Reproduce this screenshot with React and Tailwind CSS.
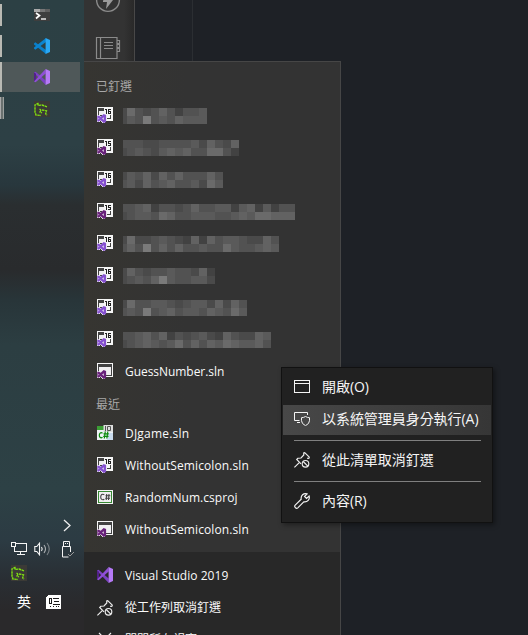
import React from "react";

// Brightness digits of the blurred file names: first cell is half width.
const BLURRED = [
  { v: 16, rows: ["26323531334", "24383435444"] },
  { v: 15, rows: ["333223333425325", "234324545336631"] },
  { v: 16, rows: ["2435253533353", "3425345334264"] },
  { v: 15, rows: ["3345133235334414514133", "2344365334443345466555"] },
  { v: 16, rows: ["26223432151534432253", "35383535334336433454"] },
  { v: 16, rows: ["253233433251", "234358433442"] },
  { v: 16, rows: ["2633443234425253", "3438345344354364"] },
  { v: 16, rows: ["3345351323421532254", "2345434635354654453"] },
];

function Mosaic({ rows }) {
  return (
    <div className="ml-[10px] flex flex-col">
      {rows.map((r, i) => (
        <div key={i} className="flex">
          {r.split("").map((c, j) => {
            const g = 58 + Number(c) * 8;
            return (
              <span key={j} className={j === 0 ? "h-2 w-1" : "h-2 w-2"} style={{ backgroundColor: `rgb(${g},${g},${g})` }} />
            );
          })}
        </div>
      ))}
    </div>
  );
}

function SolutionIcon({ v, plain, dark }) {
  const c = dark || v === 15 ? "#68217a" : "#8550d0";
  return (
    <svg width="16" height="16" viewBox="0 0 16 16" className="shrink-0" shapeRendering="crispEdges">
      <rect width="16" height="14" fill="#f6f6f6" />
      <rect x="1" y="1" width="14" height="12" fill="#424242" />
      {plain ? (
        <rect x="2" y="4" width="12" height="8" fill="#f0eff1" />
      ) : (
        <>
          <rect x="2" y="4" width="6" height="4" fill="#f0eff1" />
          <rect x="7" y="1" width="8" height="7" fill="#f6f6f6" />
          <path d="M8 2h2v5h-1V3h-1z" fill="#222" />
          {v === 16 ? (
            <path d="M14 2.500H11.500V6.500H13.500V4.500H11.500" fill="none" stroke="#222" />
          ) : (
            <path d="M14 2.500H11.500V4.500H13.500V6.500H11" fill="none" stroke="#222" />
          )}
          <path d="M9 8h6v5H9z" fill="#f6f6f6" />
          <path d="M10 11.500h3.500V8" fill="none" stroke="#424242" />
        </>
      )}
      <path d="M0 8h2l2 1 2-2h2l1 1v7l-2 1h-1l-3-2-1 1H0z" fill="#f0eff1" />
      <g shapeRendering="auto">
        <path fillRule="evenodd" d="M.3 8.900l1.100-.5 2.300 1.400L6.600 7.100l2.500.9v7.100l-2.500.9-2.900-2.700-2.300 1.400-1.100-.5zM1.500 10.800v1.600l.9-.8zM6.700 10.300l-1.500 1.300 1.500 1.300z" fill={c} />
      </g>
    </svg>
  );
}

function CSharpSlnIcon() {
  return (
    <svg width="16" height="16" viewBox="0 0 16 16" className="shrink-0">
      <rect y="1" width="16" height="14" fill="#edf3f5" />
      <rect y="1" width="8" height="4" fill="#3c9e36" />
      <path d="M10 8h6v7h-6z" fill="#c9dbed" />
      <rect x="6.500" y="0" width="9.500" height="7" fill="#dedede" />
      <path d="M8.500 1v5M10.500 1.500h3v4h-3z" fill="none" stroke="#555" />
      <path d="M5.500 8.300C3.800 6.900 2.300 8.300 2.300 10.300s1.500 3.400 3.200 1.900M8.300 6.500l-1 7M10.800 6.500l-1 7M6.500 8.800h5.300M6.200 11.300h5.300" fill="none" stroke="#0a8a0a" strokeWidth="1.200" />
    </svg>
  );
}

function CSharpProjIcon() {
  return (
    <svg width="16" height="16" viewBox="0 0 16 16" className="shrink-0">
      <rect y="1" width="16" height="14" fill="#f4f4f4" />
      <rect x="1.500" y="2.500" width="13" height="11" fill="#f0eff1" stroke="#388a34" />
      <path d="M7.300 5.700C5.300 4.500 3.700 5.800 3.700 8s1.600 3.500 3.600 2.200M9.700 5l-.5 6M12 5l-.5 6M8.500 6.800h4.800M8.200 9.200h4.800" fill="none" stroke="#424242" strokeWidth="1.100" />
    </svg>
  );
}

function VisualStudioIcon() {
  return (
    <svg width="16" height="16" viewBox="0 0 16 16" className="shrink-0">
      <path d="M0 3.500L1.600 2.700 11.700 11.500V16L1.600 5.600V11l-1.600.9z" fill="#7b41c4" />
      <path d="M0 12.500V3.500l2 1.200v6.600z" fill="#52218a" />
      <path d="M0 12.500l1.600.8L11.700 4.500V0z" fill="#8f4fd6" />
      <path d="M11.600 0L16 2v12l-4.400 2z" fill="#b57af6" />
    </svg>
  );
}

function VSCodeIcon() {
  return (
    <svg width="16" height="16" viewBox="0 0 16 16">
      <path d="M0 5.500l1.300-1.200L12 12v4L0 6.500z" fill="#0a7fc9" />
      <path d="M0 10.500l1.300 1.200L12 4V0L0 9.500z" fill="#0a84d0" />
      <path d="M11.600 0L16 2v12l-4.400 2z" fill="#2aa8f4" />
    </svg>
  );
}

function TerminalIcon() {
  return (
    <svg width="16" height="12" viewBox="0 0 16 12">
      <rect width="16" height="12" fill="#3e3e3e" />
      <rect width="16" height="3" fill="#aaa" />
      <rect x="6" width="5" height="3" fill="#777" />
      <rect x="11" width="5" height="3" fill="#606060" />
      <path d="M2 4l3.500 2.500L2 9.500" fill="none" stroke="#fff" strokeWidth="1.700" />
      <path d="M7 10h5" stroke="#ddd" strokeWidth="1.600" />
    </svg>
  );
}

function GreenIcon() {
  return (
    <svg width="16" height="16" viewBox="0 0 16 16">
      <rect width="16" height="16" fill="#3b3a36" />
      <path d="M4.500 2L1 4v7l1 3 5 .5M4 2v2.500L8 4l5.500 2M7 9l-1.500-1M7 9l-1 2 2 1M8 9l4.500.8-.8 3 1.300 1.500" fill="none" stroke="#7fe312" strokeWidth="1.350" strokeDasharray="2.500 .6" />
    </svg>
  );
}

function UnpinIcon() {
  return (
    <svg width="16" height="16" viewBox="0 0 16 16" fill="none" stroke="#f0f0f0" strokeWidth="1.150" className="shrink-0">
      <path d="M.4 15.400L5 10.800M7 11.800L2.700 7.500 3.800 6.300 7 6 9.800 3 9.700 1 10.700.7 15.300 5.200 14.800 6.400 13 6.300" />
      <circle cx="11.500" cy="11.800" r="3.300" />
      <path d="M9.200 9.500l4.600 4.600" />
    </svg>
  );
}

function JumpRow({ icon, children, track = "tracking-[0.05px]" }) {
  return (
    <div className="flex h-8 shrink-0 items-center pb-[2px] pl-[13px]">
      {icon}
      <span className={`ml-3 whitespace-nowrap pt-[2px] text-[12px] leading-5 text-[#fafafa] ${track}`}>{children}</span>
    </div>
  );
}

function JumpList() {
  return (
    <div className="flex h-[574px] w-[257px] flex-col overflow-hidden border-t border-r border-[#464646] bg-[#333]">
      <div className="flex h-[490px] shrink-0 flex-col bg-linear-to-r from-[#363531] to-[#333] to-40%">
        <div className="h-[38px] shrink-0 pt-[15px] pl-3 text-[12px] leading-5 text-[#a8a8a8]">已釘選</div>
        {BLURRED.map((b, i) => (
          <div key={i} className="flex h-8 shrink-0 items-center pl-[13px]">
            <div className="-mt-[2px] flex"><SolutionIcon v={b.v} /></div>
            <Mosaic rows={b.rows} />
          </div>
        ))}
        <JumpRow icon={<SolutionIcon plain dark />} track="tracking-[-0.05px]">GuessNumber.sln</JumpRow>
        <div className="h-[30px] shrink-0 pt-[7px] pl-3 text-[12px] leading-5 text-[#a8a8a8]">最近</div>
        <JumpRow icon={<CSharpSlnIcon />} track="tracking-[0.2px]">DJgame.sln</JumpRow>
        <JumpRow icon={<SolutionIcon v={16} />} track="tracking-[0.1px]">WithoutSemicolon.sln</JumpRow>
        <JumpRow icon={<CSharpProjIcon />}>RandomNum.csproj</JumpRow>
        <JumpRow icon={<SolutionIcon plain dark />} track="tracking-[0.1px]">WithoutSemicolon.sln</JumpRow>
      </div>
      <div className="flex h-[83px] shrink-0 flex-col overflow-hidden bg-[#282828] pt-2">
        <JumpRow icon={<VisualStudioIcon />}>Visual Studio 2019</JumpRow>
        <JumpRow icon={<span className="mt-[2px] flex"><UnpinIcon /></span>} track="tracking-normal">從工作列取消釘選</JumpRow>
        <JumpRow icon={<svg width="16" height="16" viewBox="0 0 16 16" className="mt-[2px]" stroke="#f0f0f0" strokeWidth="1.200"><path d="M2 1l12 12M14 1L2 13" /></svg>} track="tracking-normal">關閉所有視窗</JumpRow>
      </div>
    </div>
  );
}

function TaskSlot({ children, active, h }) {
  return (
    <div className={`flex w-20 items-center ${h} ${active ? "bg-[#4f5859]" : ""}`}>
      <span className={active ? "h-full w-[2px] bg-[#b9b9b3]" : "h-[22px] w-[2px] bg-[#b9b9b3]"} />
      <span className="ml-8 flex">{children}</span>
    </div>
  );
}

function TaskBar() {
  return (
    <div className="flex h-full w-[84px] shrink-0 flex-col bg-[linear-gradient(180deg,#2c4044_0px,#2d4045_145px,#28373d_185px,#2a2e30_205px,#292b2d_270px,#283539_300px,#2c3e42_345px,#2d4145_490px,#2c3b43_540px,#292e33_580px,#2a292b_610px,#2a292b_635px)]">
      <TaskSlot h="h-[30px]"><TerminalIcon /></TaskSlot>
      <TaskSlot h="h-8"><VSCodeIcon /></TaskSlot>
      <TaskSlot h="h-[30px]" active><VisualStudioIcon /></TaskSlot>
      <div className="flex h-8 items-center">
        <span className="h-[22px] w-px bg-[#aaa]" />
        <span className="h-[22px] w-[2px] bg-[#69706f]" />
        <span className="h-[22px] w-px bg-[#9ba09e]" />
        <span className="mt-[2px] ml-[30px] flex"><GreenIcon /></span>
      </div>
      <div className="mt-auto flex h-[117px] flex-col text-white">
        <svg width="8" height="13" viewBox="0 0 8 13" className="ml-[63px] mt-[1px]" fill="none" stroke="#eee" strokeWidth="1.300"><path d="M1 1l6 5.500-6 5.500" /></svg>
        <div className="mt-[8px] flex h-[18px] items-center">
          <svg width="17" height="14" viewBox="0 0 17 14" className="ml-[11px]" fill="none" stroke="#f4f4f4" shapeRendering="crispEdges"><path d="M5 1.500h10.500v8h-12V5M6 12.500h8M9.500 9.500v3M.5.500h4v4h-4z" /></svg>
          <svg width="17" height="14" viewBox="0 0 17 14" className="ml-[6px]" fill="none" stroke="#f4f4f4" strokeWidth="1.100"><path d="M.8 4.500h2L5.500 1.200v11.600L2.800 9.500h-2z" /><path d="M7.500 5q1.400 2 0 4" /><path d="M10 3q3 4 0 8" opacity=".65" /><path d="M13 1q4.500 6 0 12" opacity=".4" /></svg>
          <svg width="14" height="17" viewBox="0 0 14 17" className="ml-[10px]" fill="none" stroke="#f4f4f4"><path d="M2.500 5V.5h6V5M9.500 11V5.500h-8v10.500h6M4 2.500h1M6 2.500h1" /><path d="M7 13l2 2 4-4" stroke="#999" /></svg>
        </div>
        <span className="mt-[7px] ml-[11px] flex"><GreenIcon /></span>
        <div className="mt-[9px] flex h-6 items-center">
          <span className="ml-[17px] w-4 text-[14px] leading-5">英</span>
          <svg width="15" height="14" viewBox="0 0 15 14" className="ml-[13px]" shapeRendering="crispEdges">
            <path d="M2 0h13v14H0V2z" fill="#fff" />
            <path d="M3.500 3v6M5.500 3v6M3 3.500h3M3 8.500h3M7 3.500h6M8 6.500h5M7 9.500h7M4 11.500h1M7 11.500h1M10 11.500h1M12 11.500h1" fill="none" stroke="#1b1b1b" />
          </svg>
        </div>
      </div>
    </div>
  );
}

function SideStrip() {
  return (
    <div className="flex h-[61px] w-full">
      <div className="flex w-[50px] flex-col items-start overflow-hidden bg-linear-to-r from-[#333] from-80% to-[#292929]">
        <svg width="50" height="61" viewBox="0 0 50 61" fill="none" stroke="#8b8b8b">
          <circle cx="24" cy="0" r="11.400" strokeWidth="1.400" />
          <path d="M19 1l2-5h7l-2 4h3l-7 9 1-7h-4z" fill="#999" stroke="none" />
          <path d="M12.500 37.500h20.500v21H12.500zM16.500 37.500v21M20 42.500h9M20 45.500h9M20 48.500h9M33 40.500h2.500v3H33M33 44.500h2.500v3H33M33 48.500h2.500v3H33" strokeWidth="1.200" />
        </svg>
      </div>
      <div className="w-px bg-[#484848]" />
      <div className="w-[58px] border-r border-[#2b2e32] bg-[#1f2227]" />
    </div>
  );
}

function MenuRow({ icon, active, children }) {
  return (
    <div className={`flex h-[30px] shrink-0 items-center pl-[11px] ${active ? "bg-linear-to-r from-[#484848] to-[#363636] pb-[2px]" : ""}`}>
      {icon}
      <span className="ml-3 whitespace-nowrap text-[14px] leading-5 tracking-[-0.05px] text-[#f5f5f5]">{children}</span>
    </div>
  );
}

function ContextMenu() {
  return (
    <div className="absolute left-[281px] top-[367px] flex h-[156px] w-[212px] flex-col border border-[#111] bg-[#212121] px-px pt-1 shadow-[2px_2px_5px_rgba(0,0,0,0.4)]">
      <MenuRow icon={<svg width="16" height="14" viewBox="0 0 16 14" fill="none" stroke="#f4f4f4" shapeRendering="crispEdges"><path d="M.5.500h15v12H.5zM.5 3.500h15" /></svg>}>開啟(O)</MenuRow>
      <div className="h-[3px] shrink-0" />
      <MenuRow active icon={<svg width="16" height="14" viewBox="0 0 16 14" fill="none" stroke="#f4f4f4"><path d="M13.500 3V.5H.5v8H5.500M3 10.500h3" /><path d="M11.500 4.500q-2 1.200-4 1.200v3q0 3 4 5 4-2 4-5v-3q-2 0-4-1.200z" /></svg>}>以系統管理員身分執行(A)</MenuRow>
      <div className="ml-[11px] mt-[5px] h-px w-[187px] shrink-0 bg-[#808080]" />
      <div className="h-1 shrink-0" />
      <MenuRow icon={<UnpinIcon />}>從此清單取消釘選</MenuRow>
      <div className="ml-[11px] mt-[6px] h-px w-[187px] shrink-0 bg-[#808080]" />
      <div className="h-1 shrink-0" />
      <MenuRow icon={<svg width="16" height="16" viewBox="0 0 16 16" fill="none" stroke="#f4f4f4" strokeWidth="1.150"><path d="M1.200 12.200l6-6C6.600 2.500 9.500-.2 13 .9l-2.500 2.600 2 2L15.100 3c1.100 3.500-1.700 6.400-5.300 5.800l-6 6c-1.600 1.500-4.100-1-2.600-2.600z" /></svg>}>內容(R)</MenuRow>
    </div>
  );
}

export default function App() {
  return (
    <div className="relative flex h-[635px] w-[528px] overflow-hidden bg-[#1e2126] font-['Open_Sans','Noto_Sans_CJK_TC',sans-serif]">
      <TaskBar />
      <div className="flex w-[444px] flex-col">
        <SideStrip />
        <JumpList />
      </div>
      <ContextMenu />
    </div>
  );
}
